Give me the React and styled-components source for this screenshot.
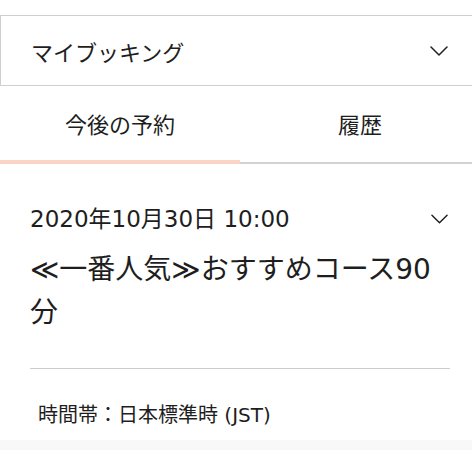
import React, { useState } from "react";
import styled, { createGlobalStyle } from "styled-components";

const GlobalStyle = createGlobalStyle`
  html, body {
    margin: 0;
    padding: 0;
    overflow-x: hidden;
    background: #ffffff;
  }
  body {
    font-family: "DejaVu Sans", "Noto Sans CJK JP", sans-serif;
    color: #1e1e1e;
  }
`;

const Page = styled.div`
  width: 480px;
  padding-top: 15px;
`;

const Dropdown = styled.button`
  display: flex;
  align-items: center;
  justify-content: space-between;
  width: 100%;
  height: 71px;
  padding: 0 31px 0 30px;
  box-sizing: border-box;
  background: #fff;
  border: 1px solid #cfcfcf;
  font: inherit;
  font-size: 22px;
  color: inherit;
  text-align: left;
`;

const Chevron = ({ width = 18 }) => (
  <svg width={width} height="10" viewBox="0 0 18 10" fill="none">
    <polyline
      points="1,1 9,9 17,1"
      stroke="#1e1e1e"
      strokeWidth="1.5"
      strokeLinecap="round"
      strokeLinejoin="round"
    />
  </svg>
);

const TabBar = styled.div`
  display: grid;
  grid-template-columns: 1fr 1fr;
  border-bottom: 2px solid #d2d2d2;
`;

const Tab = styled.button`
  height: 78px;
  box-sizing: border-box;
  background: none;
  border: none;
  border-bottom: 4px solid ${({ $active }) => ($active ? "#fbd4c6" : "transparent")};
  margin-bottom: -2px;
  font: inherit;
  font-size: 22px;
  color: inherit;
  padding: 0;
`;

const Card = styled.div`
  padding: 40px 30px 0;
`;

const DateRow = styled.div`
  display: flex;
  align-items: center;
  justify-content: space-between;
  font-size: 23px;
  line-height: 30px;
  padding-right: 2px;
`;

const Title = styled.h2`
  margin: 14px 0 0;
  font-size: 28px;
  font-weight: 400;
  line-height: 43px;
`;

const Divider = styled.hr`
  margin: 34px 0 0;
  border: none;
  border-top: 1px solid #cccccc;
`;

const TimeZone = styled.p`
  margin: 0;
  padding: 33px 8px 12px;
  font-size: 20px;
  line-height: 26px;
`;

const Footer = styled.div`
  height: 40px;
  background: #f8f8f8;
`;

export default function App() {
  const [tab, setTab] = useState(0);

  return (
    <>
      <GlobalStyle />
      <Page>
        <Dropdown>
          <span>マイブッキング</span>
          <Chevron />
        </Dropdown>
        <TabBar>
          <Tab $active={tab === 0} onClick={() => setTab(0)}>
            今後の予約
          </Tab>
          <Tab $active={tab === 1} onClick={() => setTab(1)}>
            履歴
          </Tab>
        </TabBar>
        <Card>
          <DateRow>
            <span>2020年10月30日 10:00</span>
            <Chevron width={17} />
          </DateRow>
          <Title>≪一番人気≫おすすめコース90分</Title>
          <Divider />
          <TimeZone>時間帯：日本標準時 (JST)</TimeZone>
        </Card>
        <Footer />
      </Page>
    </>
  );
}
